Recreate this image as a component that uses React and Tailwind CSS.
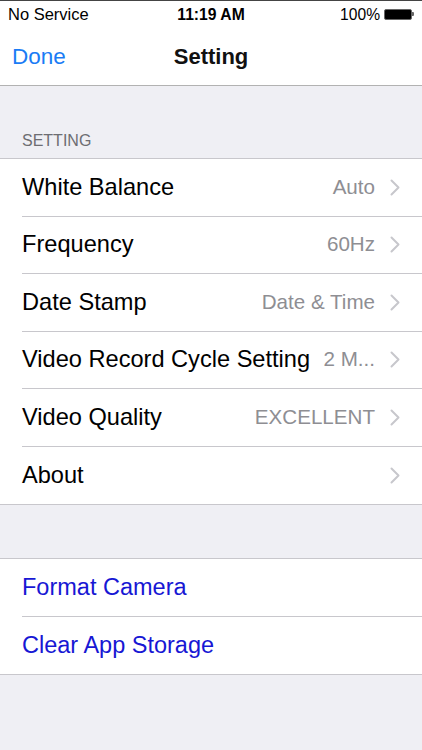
const font = { fontFamily: '"Liberation Sans", Arial, sans-serif' }

function Chevron() {
  return (
    <svg width="10" height="17" viewBox="0 0 10 17" className="shrink-0">
      <path d="M1.5 1.5 L8.5 8.5 L1.5 15.5" fill="none" stroke="#c7c7cc" strokeWidth="2" strokeLinecap="round" strokeLinejoin="round" />
    </svg>
  )
}

function Row({ label, value, last }) {
  return (
    <div className="flex h-[57.5px] items-center pl-[22px]">
      <div className={`flex h-full flex-1 items-center pr-[22px] ${last ? '' : 'border-b border-[#c8c7cc]'}`}>
        <span className="flex-1 whitespace-nowrap text-[23.6px] text-black">{label}</span>
        {value && <span className="mr-[15px] whitespace-nowrap text-[20.6px] text-[#8e8e93]">{value}</span>}
        <Chevron />
      </div>
    </div>
  )
}

function ActionRow({ label, last }) {
  return (
    <div className="flex h-[57.5px] items-center pl-[22px]">
      <div className={`flex h-full flex-1 items-center ${last ? '' : 'border-b border-[#c8c7cc]'}`}>
        <span className="text-[23.5px] text-[#1717d4]">{label}</span>
      </div>
    </div>
  )
}

export default function App() {
  const rows = [
    { label: 'White Balance', value: 'Auto' },
    { label: 'Frequency', value: '60Hz' },
    { label: 'Date Stamp', value: 'Date & Time' },
    { label: 'Video Record Cycle Setting', value: '2 M...' },
    { label: 'Video Quality', value: 'EXCELLENT' },
    { label: 'About', value: '' },
  ]

  return (
    <div className="flex h-[750px] w-[422px] flex-col overflow-hidden bg-[#efeff4]" style={font}>
      {/* status + nav */}
      <div className="border-b border-[#b2b2b2] bg-white">
        <div className="flex h-[28px] items-center border-t border-[#444] px-[8px] text-[16.5px] text-black">
          <span className="flex-1">No Service</span>
          <span className="text-[15.7px] font-bold">11:19 AM</span>
          <div className="flex flex-1 items-center justify-end gap-[4px]">
            <span className="text-[15.6px]">100%</span>
            <div className="flex items-center">
              <div className="h-[11px] w-[28px] rounded-[2px] border border-[#666] bg-black" />
              <div className="h-[4px] w-[2px] rounded-r-[1px] bg-[#666]" />
            </div>
          </div>
        </div>
        <div className="relative flex h-[57px] items-center px-[12px]">
          <span className="text-[22.5px] text-[#1a7cf5]">Done</span>
          <span className="absolute left-1/2 -translate-x-1/2 text-[22px] font-bold text-[#111]">Setting</span>
        </div>
      </div>

      {/* section header */}
      <div className="flex h-[72px] items-end px-[22px] pb-[5px]">
        <span className="text-[16px] text-[#6d6d72]">SETTING</span>
      </div>

      <div className="border-y border-[#c8c7cc] bg-white">
        {rows.map((r, i) => (
          <Row key={r.label} label={r.label} value={r.value} last={i === rows.length - 1} />
        ))}
      </div>

      <div className="h-[53px]" />

      <div className="border-y border-[#c8c7cc] bg-white">
        <ActionRow label="Format Camera" />
        <ActionRow label="Clear App Storage" last />
      </div>
    </div>
  )
}
